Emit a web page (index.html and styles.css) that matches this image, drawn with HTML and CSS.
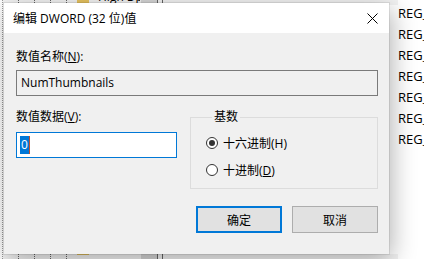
FILE: index.html
```html
<!DOCTYPE html>
<html lang="zh-CN">
<head>
  <meta charset="UTF-8" />
  <title>编辑 DWORD (32 位)值</title>
  <link rel="stylesheet" href="styles.css">
</head>
<body>
  <div class="desktop">
    <!-- registry tree behind the dialog -->
    <div class="tree">
      <div class="tree-row">
        <i class="dots"></i><i class="dots"></i><i class="dots"></i><i class="dots"></i>
        <i class="folder"></i>
        <span class="node">High Dpi</span>
        <i class="scroll"></i><i class="grip"></i><i class="grip"></i>
      </div>
      <div class="tree-row">
        <i class="dots"></i><i class="dots"></i><i class="dots"></i><i class="dots"></i>
        <i class="folder low"></i>
        <span class="node"></span>
        <i class="scroll"></i><i class="grip"></i><i class="grip"></i>
      </div>
    </div>

    <!-- value list behind the dialog -->
    <ul class="values">
      <li>REG_DWORD</li>
      <li>REG_DWORD</li>
      <li>REG_DWORD</li>
      <li>REG_DWORD</li>
      <li>REG_DWORD</li>
      <li>REG_DWORD</li>
      <li>REG_DWORD</li>
    </ul>

    <!-- Edit DWORD dialog -->
    <div class="dialog">
      <div class="titlebar">
        <span>编辑 DWORD (32 位)值</span>
        <svg class="close" width="11" height="11" viewBox="0 0 11 11">
          <path d="M0.5 0.5 L10.5 10.5 M10.5 0.5 L0.5 10.5" stroke="#000" stroke-width="1" fill="none"/>
        </svg>
      </div>

      <div class="dialog-body">
        <div class="label">数值名称(<u>N</u>):</div>
        <div class="name-input">NumThumbnails</div>

        <div class="data-row">
          <div class="data-col">
            <div class="label">数值数据(<u>V</u>):</div>
            <div class="data-input"><span class="selected">0</span><span class="caret"></span></div>
          </div>

          <fieldset class="base">
            <legend>基数</legend>
            <div class="radio-row">
              <span class="radio checked"></span>
              <span>十六进制(H)</span>
            </div>
            <div class="radio-row">
              <span class="radio"></span>
              <span>十进制(<u>D</u>)</span>
            </div>
          </fieldset>
        </div>

        <div class="actions">
          <button class="btn default">确定</button>
          <button class="btn">取消</button>
        </div>
      </div>
    </div>
  </div>
</body>
</html>
```

FILE: styles.css
```css
body {
  margin: 0;
  width: 424px;
  height: 259px;
  overflow: hidden;
  background: #fff;
  color: #000;
  font-family: "Open Sans", "Noto Sans CJK SC", sans-serif;
  font-size: 12px;
}
.desktop {
  position: relative;
  display: flex;
  height: 259px;
}
.tree {
  flex: none;
  width: 395px;
  margin-left: 2px;
  border-left: 1px dotted #9a9a9a;
  display: flex;
  flex-direction: column;
  justify-content: space-between;
}
.tree-row {
  height: 5px;
  overflow: hidden;
  display: flex;
  align-items: stretch;
  padding-left: 15px;
  background: #f3f3f3;
}
.tree-row i {
  flex: none;
}
.dots {
  width: 0;
  border-left: 1px dotted #666;
}
.dots + .dots {
  margin-left: 15px;
}
.folder {
  width: 12px;
  margin-left: 10px;
  background: #e8c460;
}
.folder.low {
  height: 1px;
}
.node {
  flex: none;
  width: 42px;
  margin-left: 9px;
  line-height: 16px;
  align-self: flex-end;
  white-space: nowrap;
  overflow: hidden;
}
.scroll {
  width: 16px;
  margin-left: 1px;
  background: #d6d6d6;
}
.grip {
  width: 1px;
  background: #666;
}
.grip + .grip {
  margin-left: 4px;
}
.values {
  flex: 1;
  min-width: 0;
  overflow: hidden;
  margin: 0;
  padding: 3px 0 0 0;
  list-style: none;
  white-space: nowrap;
}
.values li {
  line-height: 21px;
  font-size: 13px;
}

/* dialog */
.dialog {
  position: absolute;
  left: 4px;
  top: 3px;
  width: 385px;
  height: 251px;
  background: #f0f0f0;
  box-shadow: 0 0 0 1px rgba(0, 0, 0, 0.08), 2px 6px 24px rgba(0, 0, 0, 0.32);
  display: flex;
  flex-direction: column;
}
.titlebar {
  height: 30px;
  background: #fff;
  display: flex;
  align-items: center;
  justify-content: space-between;
  padding: 0 11px 0 9px;
}
.dialog-body {
  padding: 16px 11px 0 12px;
  display: flex;
  flex-direction: column;
}
.label {
  line-height: 16px;
}
.name-input {
  margin-top: 5px;
  height: 26px;
  box-sizing: border-box;
  border: 1px solid #7a7a7a;
  background: #f0f0f0;
  padding-left: 4px;
  line-height: 24px;
}
.data-row {
  margin-top: 13px;
  display: flex;
  gap: 13px;
}
.data-col {
  width: 161px;
}
.data-input {
  margin-top: 7px;
  height: 26px;
  box-sizing: border-box;
  border: 1px solid #0078d7;
  background: #fff;
  padding: 3px 0 0 3px;
  display: flex;
  align-items: flex-start;
}
.selected {
  background: #0078d7;
  color: #fff;
  padding: 0 1px;
  line-height: 18px;
}
.caret {
  width: 1px;
  height: 18px;
  background: #c0502c;
}
.base {
  width: 188px;
  box-sizing: border-box;
  margin: 0;
  border: 1px solid #dcdcdc;
  padding: 10px 0 10px 15px;
}
.base legend {
  margin-left: 6px;
  padding: 0 2px;
  line-height: 16px;
}
.radio-row {
  display: flex;
  align-items: center;
  gap: 5px;
  height: 16px;
}
.radio-row + .radio-row {
  margin-top: 11px;
}
.radio {
  width: 12px;
  height: 12px;
  box-sizing: border-box;
  border: 1px solid #333;
  border-radius: 50%;
  background: #fff;
  display: flex;
  align-items: center;
  justify-content: center;
}
.radio.checked::after {
  content: "";
  width: 6px;
  height: 6px;
  border-radius: 50%;
  background: #333;
}
.actions {
  margin-top: 17px;
  display: flex;
  justify-content: flex-end;
  gap: 10px;
}
.btn {
  width: 86px;
  height: 27px;
  box-sizing: border-box;
  background: #e1e1e1;
  border: 1px solid #adadad;
  font: inherit;
  color: #000;
  padding: 0;
}
.btn.default {
  border: 2px solid #0078d7;
}
```
